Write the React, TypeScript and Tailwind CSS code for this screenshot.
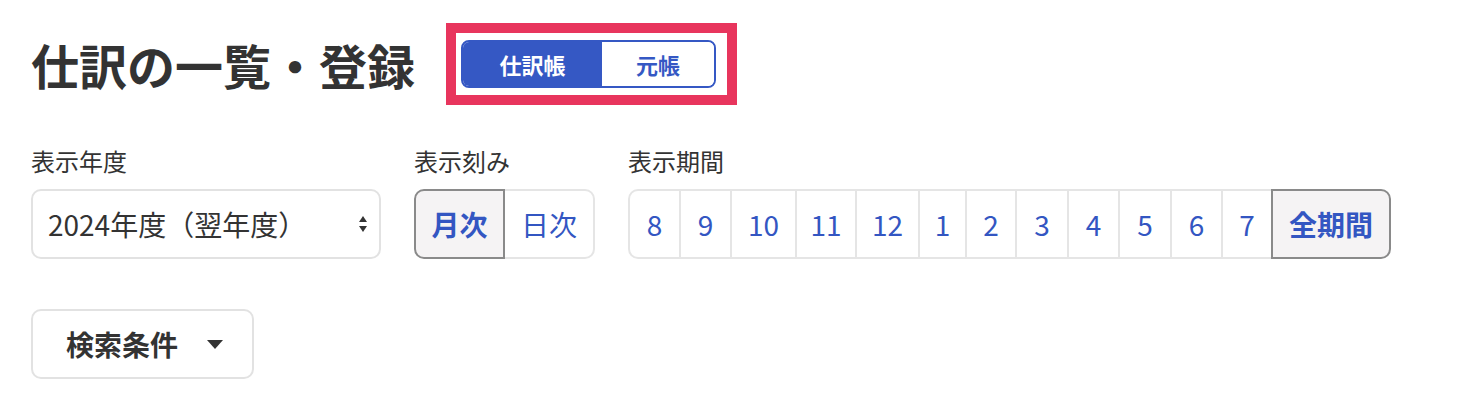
import { useState } from "react";

const FONT = { fontFamily: '"Noto Sans CJK JP", "Noto Sans", sans-serif' };

// cell widths include the 2px overlap with the previous cell
const MONTHS = [
  { label: "8", width: "w-[53px]" },
  { label: "9", width: "w-[53px]" },
  { label: "10", width: "w-[67px]" },
  { label: "11", width: "w-[62px]" },
  { label: "12", width: "w-[65px]" },
  { label: "1", width: "w-[49px]" },
  { label: "2", width: "w-[52px]" },
  { label: "3", width: "w-[54px]" },
  { label: "4", width: "w-[53px]" },
  { label: "5", width: "w-[54px]" },
  { label: "6", width: "w-[53px]" },
  { label: "7", width: "w-[52px]" },
];

function SelectArrows() {
  return (
    <svg width="10" height="18" viewBox="0 0 10 18" className="pointer-events-none absolute right-[13px] top-1/2 -translate-y-1/2">
      <path d="M5 1 L9 7 H1 Z" fill="#333" />
      <path d="M5 17 L9 11 H1 Z" fill="#333" />
    </svg>
  );
}

export default function App() {
  const [book, setBook] = useState<"journal" | "ledger">("journal");
  const [step, setStep] = useState<"month" | "day">("month");
  const [period, setPeriod] = useState("all");

  return (
    <div style={FONT} className="min-h-[420px] bg-white pl-[31px] pt-[23px] text-[#333]">
      <div className="flex items-center gap-[31px]">
        <h1 className="text-[48px] font-bold leading-none">仕訳の一覧・登録</h1>
        <div className="border-[10px] border-[#e8355d] pb-[7px] pl-[5px] pr-[11px] pt-[7px]">
          <div className="flex h-[48px] w-[255px] overflow-hidden rounded-[8px] border-2 border-[#3558c4] text-[22px] font-bold">
            <button
              type="button"
              onClick={() => setBook("journal")}
              className={
                book === "journal"
                  ? "w-[139px] bg-[#3558c4] text-white"
                  : "w-[139px] bg-white text-[#3558c4]"
              }
            >
              仕訳帳
            </button>
            <button
              type="button"
              onClick={() => setBook("ledger")}
              className={
                book === "ledger"
                  ? "flex-1 bg-[#3558c4] text-white"
                  : "flex-1 bg-white text-[#3558c4]"
              }
            >
              元帳
            </button>
          </div>
        </div>
      </div>

      <div className="mt-[38px] flex gap-[33px]">
        <div>
          <label className="mb-[10px] block text-[24px] leading-[36px]">表示年度</label>
          <div className="relative w-[350px]">
            <select className="h-[70px] w-full appearance-none rounded-[10px] border-2 border-[#e2e2e2] bg-white pl-[15px] text-[28px] text-[#333] outline-none">
              <option>2024年度（翌年度）</option>
              <option>2023年度（当年度）</option>
            </select>
            <SelectArrows />
          </div>
        </div>

        <div>
          <label className="mb-[10px] block text-[24px] leading-[36px]">表示刻み</label>
          <div className="flex h-[70px] text-[28px] text-[#3356c2]">
            <button
              type="button"
              onClick={() => setStep("month")}
              className={
                step === "month"
                  ? "relative z-10 w-[91px] rounded-l-[10px] border-2 border-[#8a8a8a] bg-[#f5f3f4] font-bold"
                  : "w-[91px] rounded-l-[10px] border-2 border-[#e5e5e5] bg-white"
              }
            >
              月次
            </button>
            <button
              type="button"
              onClick={() => setStep("day")}
              className={
                step === "day"
                  ? "relative z-10 -ml-[2px] w-[92px] rounded-r-[10px] border-2 border-[#8a8a8a] bg-[#f5f3f4] font-bold"
                  : "-ml-[2px] w-[92px] rounded-r-[10px] border-2 border-[#e5e5e5] bg-white"
              }
            >
              日次
            </button>
          </div>
        </div>

        <div>
          <label className="mb-[10px] block text-[24px] leading-[36px]">表示期間</label>
          <div className="flex h-[70px] text-[28px] text-[#3356c2]">
            {MONTHS.map((m, i) => (
              <button
                key={m.label}
                type="button"
                onClick={() => setPeriod(m.label)}
                className={[
                  m.width,
                  i === 0 ? "rounded-l-[10px]" : "-ml-[2px]",
                  period === m.label
                    ? "relative z-10 border-2 border-[#8a8a8a] bg-[#f5f3f4] font-bold"
                    : "border-2 border-[#e5e5e5] bg-white",
                ].join(" ")}
              >
                {m.label}
              </button>
            ))}
            <button
              type="button"
              onClick={() => setPeriod("all")}
              className={
                period === "all"
                  ? "relative z-10 -ml-[2px] w-[120px] rounded-r-[10px] border-2 border-[#8a8a8a] bg-[#f5f3f4] font-bold"
                  : "-ml-[2px] w-[120px] rounded-r-[10px] border-2 border-[#e5e5e5] bg-white"
              }
            >
              全期間
            </button>
          </div>
        </div>
      </div>

      <button
        type="button"
        className="mt-[50px] flex h-[70px] w-[223px] items-center rounded-[10px] border-2 border-[#e2e2e2] bg-white pl-[33px] text-[28px] font-bold text-[#333]"
      >
        検索条件
        <svg width="16" height="9" viewBox="0 0 16 9" className="ml-[29px]">
          <path d="M0 0 H16 L8 9 Z" fill="#333" />
        </svg>
      </button>
    </div>
  );
}
